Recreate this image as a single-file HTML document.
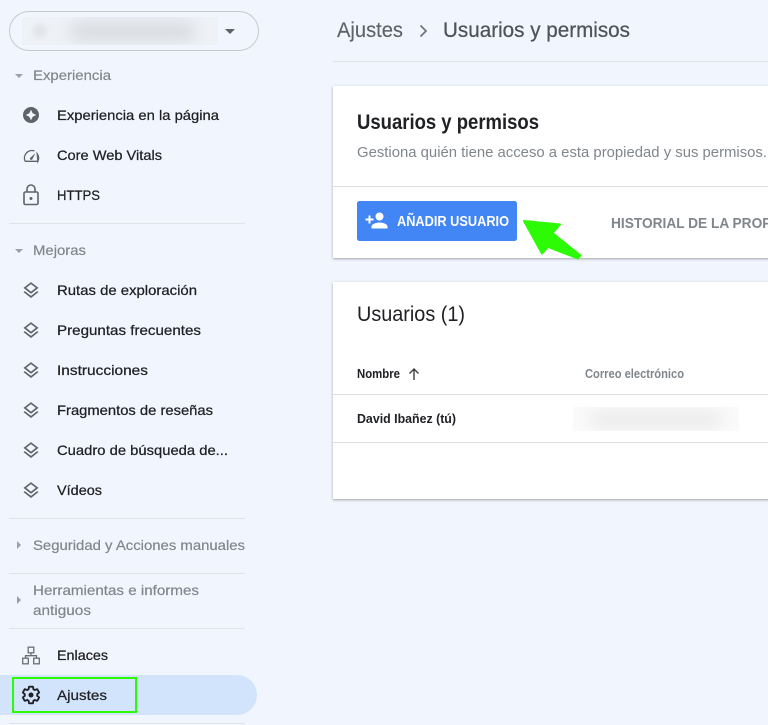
<!DOCTYPE html>
<html lang="es"><head><meta charset="utf-8"><title>Usuarios y permisos</title>
<style>
html,body{margin:0;padding:0;width:768px;height:725px;overflow:hidden;background:#f1f5fd}
svg{display:block}
text{font-family:"Liberation Sans",sans-serif;font-size:14px}
.i{fill:#202124;stroke:#202124;stroke-width:.25px}
.h{fill:#80868b;stroke:#80868b;stroke-width:.2px}
.d{fill:#e1e3e8}
.l{fill:#5f6368}
</style></head><body>
<svg width="768" height="725" viewBox="0 0 768 725" xmlns="http://www.w3.org/2000/svg">
<defs>
<filter id="b" x="-30%" y="-150%" width="160%" height="400%"><feGaussianBlur stdDeviation="8"/></filter>
<filter id="b2" x="-100%" y="-100%" width="300%" height="300%"><feGaussianBlur stdDeviation="2.500"/></filter>
<filter id="s" x="-5%" y="-5%" width="110%" height="115%"><feDropShadow dx="0" dy="1" stdDeviation="1.3" flood-color="#3c4043" flood-opacity=".45"/></filter>
<clipPath id="c1"><rect x="22" y="17" width="196" height="28"/></clipPath>
<clipPath id="c2"><rect x="573" y="407" width="166" height="24"/></clipPath>
<path id="ly" d="M11.99 18.54l-7.37-5.73L3 14.07l9 7 9-7-1.63-1.27-7.38 5.74zM12 16l7.36-5.73L21 9l-9-7-9 7 1.63 1.27L12 16zm0-11.47L17.74 9 12 13.47 6.26 9 12 4.53z"/>
</defs>
<rect width="768" height="725" fill="#f1f5fd"/>

<!-- property selector -->
<rect x="9.5" y="11.5" width="249" height="39" rx="19.5" fill="#f1f5fd" stroke="#c6c9cc"/>
<rect x="22" y="17" width="196" height="28" fill="#eef1f6"/>
<g clip-path="url(#c1)">
<rect x="70" y="23" width="125" height="17" rx="8" fill="#d6d9dd" filter="url(#b)"/>
<circle cx="40" cy="31" r="7" fill="#e2e5e9" filter="url(#b2)"/>
</g>
<path d="M225 29h10l-5 5z" fill="#5f6368"/>

<!-- sidebar -->
<path d="M15 74h8l-4 4z" fill="#9aa0a6"/>
<text x="33" y="80" class="h" textLength="78" lengthAdjust="spacingAndGlyphs">Experiencia</text>

<path fill-rule="evenodd" class="l" d="M31 107a8 8 0 1 0 0 16a8 8 0 0 0 0-16zM31 109.800l1.700 3.500 3.500 1.700-3.500 1.700-1.700 3.500-1.700-3.500-3.500-1.700 3.500-1.700z"/>
<text x="57" y="120" class="i" textLength="162" lengthAdjust="spacingAndGlyphs">Experiencia en la página</text>

<path d="M25.100 161.300a7.600 7.600 0 0 1 9.300-10.400M37.200 153.800a7.600 7.600 0 0 1 .7 7.500zM25.100 161.300h12.800" fill="none" stroke="#5f6368" stroke-width="1.300"/>
<path d="M29.800 158.300l5.600-5.300-3.200 6.600a1.500 1.500 0 0 1-2.400-1.300z" class="l"/>
<text x="57" y="160" class="i" textLength="105" lengthAdjust="spacingAndGlyphs">Core Web Vitals</text>

<rect x="24" y="192" width="14" height="12.500" rx="1.300" fill="none" stroke="#5f6368" stroke-width="1.600"/>
<path d="M27 192v-3a4 4 0 0 1 8 0v3" fill="none" stroke="#5f6368" stroke-width="1.600"/>
<circle cx="31" cy="198.500" r="1.500" class="l"/>
<text x="57" y="200" class="i" textLength="43" lengthAdjust="spacingAndGlyphs">HTTPS</text>

<rect x="9" y="223" width="236" height="1" class="d"/>

<path d="M15 249h8l-4 4z" fill="#9aa0a6"/>
<text x="33" y="255" class="h" textLength="53" lengthAdjust="spacingAndGlyphs">Mejoras</text>

<use href="#ly" class="l" transform="translate(21 280.400) scale(.8333)"/>
<text x="57" y="295" class="i" textLength="140" lengthAdjust="spacingAndGlyphs">Rutas de exploración</text>
<use href="#ly" class="l" transform="translate(21 320.400) scale(.8333)"/>
<text x="57" y="335" class="i" textLength="144" lengthAdjust="spacingAndGlyphs">Preguntas frecuentes</text>
<use href="#ly" class="l" transform="translate(21 360.400) scale(.8333)"/>
<text x="57" y="375" class="i" textLength="91" lengthAdjust="spacingAndGlyphs">Instrucciones</text>
<use href="#ly" class="l" transform="translate(21 400.400) scale(.8333)"/>
<text x="57" y="415" class="i" textLength="156" lengthAdjust="spacingAndGlyphs">Fragmentos de reseñas</text>
<use href="#ly" class="l" transform="translate(21 440.400) scale(.8333)"/>
<text x="57" y="455" class="i" textLength="171" lengthAdjust="spacingAndGlyphs">Cuadro de búsqueda de...</text>
<use href="#ly" class="l" transform="translate(21 480.400) scale(.8333)"/>
<text x="57" y="495" class="i" textLength="45" lengthAdjust="spacingAndGlyphs">Vídeos</text>

<rect x="9" y="518" width="236" height="1" class="d"/>
<path d="M17 541v8l4-4z" fill="#9aa0a6"/>
<text x="33" y="550" class="h" textLength="212" lengthAdjust="spacingAndGlyphs">Seguridad y Acciones manuales</text>
<rect x="9" y="573" width="236" height="1" class="d"/>
<path d="M17 596v8l4-4z" fill="#9aa0a6"/>
<text x="33" y="595" class="h" textLength="166" lengthAdjust="spacingAndGlyphs">Herramientas e informes</text>
<text x="33" y="615" class="h" textLength="58" lengthAdjust="spacingAndGlyphs">antiguos</text>
<rect x="9" y="628" width="236" height="1" class="d"/>

<g fill="none" stroke="#6b6f74" stroke-width="1.300">
<rect x="28.200" y="647.200" width="5.600" height="5.600"/>
<rect x="22.700" y="658.200" width="5.600" height="5.600"/>
<rect x="33.700" y="658.200" width="5.600" height="5.600"/>
<path d="M31 653v2.700M25.500 658v-2.300h11v2.300"/>
</g>
<text x="57" y="660" class="i" textLength="51" lengthAdjust="spacingAndGlyphs">Enlaces</text>

<path d="M0 675h237a20 20 0 0 1 0 40H0z" fill="#d2e3fc"/>
<rect x="13" y="678" width="123" height="34" fill="none" stroke="#2cfb05" stroke-width="2"/>
<g transform="translate(21 685) scale(.8333)">
<path d="M19.430 12.980c.04-.32.07-.64.07-.98s-.03-.66-.07-.98l2.110-1.650c.19-.15.24-.42.12-.64l-2-3.460c-.12-.22-.39-.3-.61-.22l-2.490 1c-.52-.4-1.080-.73-1.690-.98l-.38-2.650C14.460 2.180 14.250 2 14 2h-4c-.25 0-.46.18-.49.42l-.38 2.650c-.61.25-1.170.59-1.690.98l-2.490-1c-.23-.09-.49 0-.61.22l-2 3.460c-.13.22-.07.49.12.64l2.110 1.650c-.04.32-.07.65-.07.98s.03.66.07.98l-2.110 1.650c-.19.15-.24.42-.12.64l2 3.460c.12.22.39.3.61.22l2.490-1c.52.4 1.080.73 1.690.98l.38 2.650c.03.24.24.42.49.42h4c.25 0 .46-.18.49-.42l.38-2.650c.61-.25 1.170-.59 1.690-.98l2.490 1c.23.09.49 0 .61-.22l2-3.460c.12-.22.07-.49-.12-.64l-2.110-1.650z" fill="none" stroke="#202124" stroke-width="2.200"/>
<circle cx="12" cy="12" r="3" fill="#202124"/>
</g>
<text x="57" y="700" class="i" textLength="50" lengthAdjust="spacingAndGlyphs">Ajustes</text>
<rect x="9" y="723" width="236" height="1" class="d"/>

<!-- header -->
<text x="337" y="37" style="font-size:21px" fill="#5f6368" stroke="#5f6368" stroke-width=".15" textLength="66" lengthAdjust="spacingAndGlyphs">Ajustes</text>
<path d="M420.500 25.500l5.500 5.500-5.500 5.500" fill="none" stroke="#6f7377" stroke-width="1.700"/>
<text x="443" y="37" style="font-size:21px" fill="#4f5257" stroke="#4f5257" stroke-width=".25" textLength="187" lengthAdjust="spacingAndGlyphs">Usuarios y permisos</text>
<rect x="333" y="61" width="435" height="1" fill="#e1e3e8"/>

<!-- card 1 -->
<rect x="333" y="86" width="470" height="172" fill="#fff" filter="url(#s)"/>
<text x="357" y="129" style="font-size:21px;font-weight:bold" fill="#202124" textLength="182" lengthAdjust="spacingAndGlyphs">Usuarios y permisos</text>
<text x="357" y="157" fill="#80868b" style="font-size:14.500px" textLength="410" lengthAdjust="spacingAndGlyphs">Gestiona quién tiene acceso a esta propiedad y sus permisos.</text>
<rect x="333" y="186" width="435" height="1" fill="#dcdde0"/>
<rect x="357" y="201" width="160" height="40" rx="2.500" fill="#4285f4"/>
<path fill="#fff" transform="translate(364.500 208.500)" d="M15 12c2.210 0 4-1.790 4-4s-1.790-4-4-4-4 1.790-4 4 1.790 4 4 4zm-9-2V7H4v3H1v2h3v3h2v-3h3v-2H6zm9 4c-2.670 0-8 1.340-8 4v2h16v-2c0-2.660-5.330-4-8-4z"/>
<text x="397" y="226" fill="#fff" style="font-size:15px;font-weight:bold" textLength="112" lengthAdjust="spacingAndGlyphs">AÑADIR USUARIO</text>
<text x="611" y="228" fill="#80868b" style="font-size:15px;font-weight:bold" textLength="203" lengthAdjust="spacingAndGlyphs">HISTORIAL DE LA PROPIEDAD</text>

<!-- green arrow -->
<path d="M524 221L560 224.500L552.500 233L580.500 255.500L578 258.500L548 247L542 253.500Z" fill="#2cfb05" stroke="#2cfb05" stroke-width="2" stroke-linejoin="round"/>

<!-- card 2 -->
<rect x="333" y="282" width="470" height="217" fill="#fff" filter="url(#s)"/>
<text x="357" y="321" style="font-size:21px" fill="#202124" textLength="108" lengthAdjust="spacingAndGlyphs">Usuarios (1)</text>
<text x="357" y="378" style="font-size:12.500px;font-weight:bold" fill="#202124" textLength="43" lengthAdjust="spacingAndGlyphs">Nombre</text>
<path d="M414 380v-10.500M409.500 373.500l4.500-4.500 4.500 4.500" fill="none" stroke="#3c4043" stroke-width="1.400"/>
<text x="585" y="378" style="font-size:12.500px;font-weight:bold" fill="#80868b" textLength="99" lengthAdjust="spacingAndGlyphs">Correo electrónico</text>
<rect x="333" y="394" width="435" height="1" fill="#dcdde0"/>
<text x="357" y="423" style="font-size:12.500px;font-weight:bold" fill="#202124" textLength="99" lengthAdjust="spacingAndGlyphs">David Ibañez (tú)</text>
<rect x="573" y="407" width="166" height="24" fill="#fafafa"/>
<g clip-path="url(#c2)"><rect x="590" y="412" width="132" height="14" rx="7" fill="#e8e8e8" filter="url(#b)"/></g>
<rect x="333" y="442" width="435" height="1" fill="#dcdde0"/>
</svg>
</body></html>
